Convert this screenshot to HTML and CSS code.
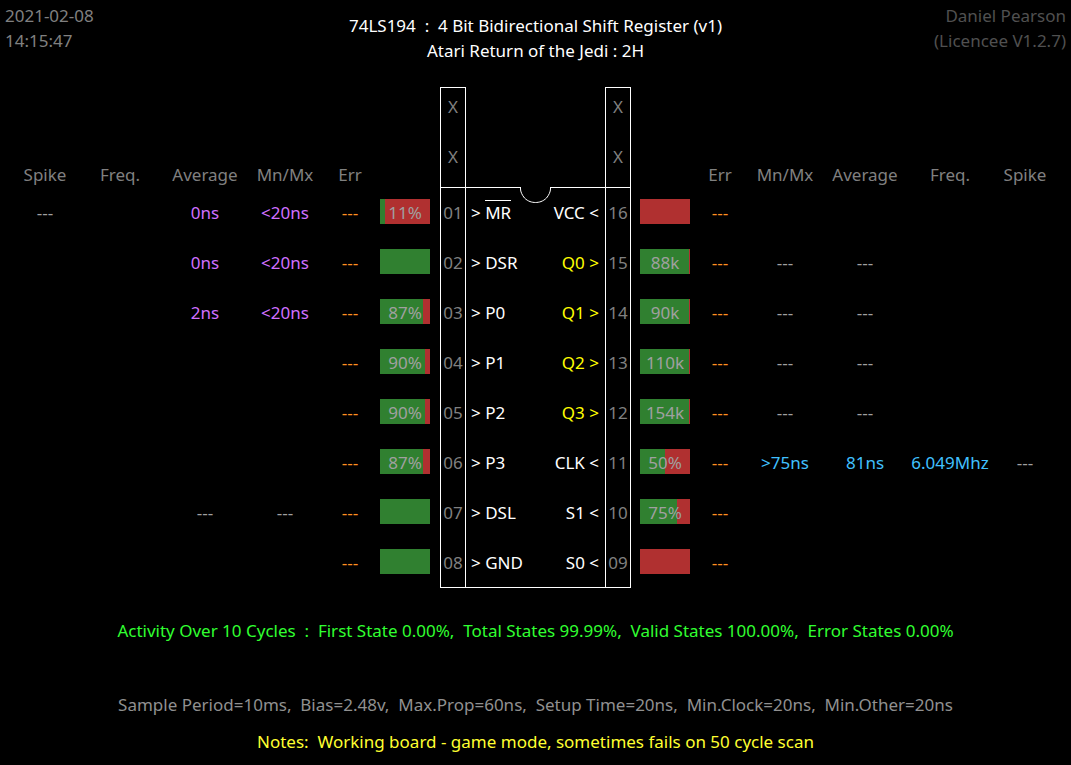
FILE: index.html
```html
<!DOCTYPE html>
<html lang="en">
<head>
<meta charset="utf-8">
<title>74LS194 : 4 Bit Bidirectional Shift Register</title>
<link rel="stylesheet" href="styles.css">
</head>
<body>
<header class="top">
  <div class="stamp">
    <div>2021-02-08</div>
    <div>14:15:47</div>
  </div>
  <div class="title">
    <div class="spaced">74LS194  :  4 Bit Bidirectional Shift Register (v1)</div>
    <div>Atari Return of the Jedi : 2H</div>
  </div>
  <div class="licence">
    <div>Daniel Pearson</div>
    <div>(Licencee V1.2.7)</div>
  </div>
</header>

<main class="board">
  <table class="readings">
    <colgroup><col class="c-spike"><col class="c-freq"><col class="c-avg"><col class="c-mnmx"><col class="c-err"><col class="c-bar"></colgroup>
    <thead>
      <tr><th>Spike</th><th>Freq.</th><th>Average</th><th>Mn/Mx</th><th>Err</th><th></th></tr>
    </thead>
    <tbody>
      <tr><td>---</td><td></td><td class="slow">0ns</td><td class="slow">&lt;20ns</td><td class="err">---</td><td><div class="bar" style="--high:10%">11%</div></td></tr>
      <tr><td></td><td></td><td class="slow">0ns</td><td class="slow">&lt;20ns</td><td class="err">---</td><td><div class="bar" style="--high:100%"></div></td></tr>
      <tr><td></td><td></td><td class="slow">2ns</td><td class="slow">&lt;20ns</td><td class="err">---</td><td><div class="bar" style="--high:86%">87%</div></td></tr>
      <tr><td></td><td></td><td></td><td></td><td class="err">---</td><td><div class="bar" style="--high:90%">90%</div></td></tr>
      <tr><td></td><td></td><td></td><td></td><td class="err">---</td><td><div class="bar" style="--high:90%">90%</div></td></tr>
      <tr><td></td><td></td><td></td><td></td><td class="err">---</td><td><div class="bar" style="--high:86%">87%</div></td></tr>
      <tr><td></td><td></td><td>---</td><td>---</td><td class="err">---</td><td><div class="bar" style="--high:100%"></div></td></tr>
      <tr><td></td><td></td><td></td><td></td><td class="err">---</td><td><div class="bar" style="--high:100%"></div></td></tr>
    </tbody>
  </table>

  <section class="chip" aria-label="74LS194 pins">
    <div class="pins">
      <div class="unused">X</div><div class="unused last">X</div>
      <div class="pin first">01</div><div class="pin">02</div><div class="pin">03</div><div class="pin">04</div>
      <div class="pin">05</div><div class="pin">06</div><div class="pin">07</div><div class="pin">08</div>
    </div>
    <div class="body">
      <div class="edge">
        <span class="line"></span>
        <svg class="notch" viewBox="0 0 31 16" width="31" height="16" aria-hidden="true"><path d="M.5 0V2C.5 4.500 2 8 4.500 11C8 14.500 12 15.500 15.500 15.500C19 15.500 23 14.500 26.500 11C29 8 30.500 4.500 30.500 2V0" fill="none" stroke="#fff"/></svg>
        <span class="line"></span>
      </div>
      <div class="labels">
        <div class="pair"><span>&gt; <span class="inverted">MR</span></span><span>VCC &lt;</span></div>
        <div class="pair"><span>&gt; DSR</span><span class="output">Q0 &gt;</span></div>
        <div class="pair"><span>&gt; P0</span><span class="output">Q1 &gt;</span></div>
        <div class="pair"><span>&gt; P1</span><span class="output">Q2 &gt;</span></div>
        <div class="pair"><span>&gt; P2</span><span class="output">Q3 &gt;</span></div>
        <div class="pair"><span>&gt; P3</span><span>CLK &lt;</span></div>
        <div class="pair"><span>&gt; DSL</span><span>S1 &lt;</span></div>
        <div class="pair"><span>&gt; GND</span><span>S0 &lt;</span></div>
      </div>
    </div>
    <div class="pins">
      <div class="unused">X</div><div class="unused last">X</div>
      <div class="pin first">16</div><div class="pin">15</div><div class="pin">14</div><div class="pin">13</div>
      <div class="pin">12</div><div class="pin">11</div><div class="pin">10</div><div class="pin">09</div>
    </div>
  </section>

  <table class="readings">
    <colgroup><col class="c-bar"><col class="c-err"><col class="c-mnmx"><col class="c-avg"><col class="c-freq"><col class="c-spike"></colgroup>
    <thead>
      <tr><th></th><th>Err</th><th>Mn/Mx</th><th>Average</th><th>Freq.</th><th>Spike</th></tr>
    </thead>
    <tbody>
      <tr><td><div class="bar" style="--high:0%"></div></td><td class="err">---</td><td></td><td></td><td></td><td></td></tr>
      <tr><td><div class="bar" style="--high:98%">88k</div></td><td class="err">---</td><td>---</td><td>---</td><td></td><td></td></tr>
      <tr><td><div class="bar" style="--high:98%">90k</div></td><td class="err">---</td><td>---</td><td>---</td><td></td><td></td></tr>
      <tr><td><div class="bar" style="--high:98%">110k</div></td><td class="err">---</td><td>---</td><td>---</td><td></td><td></td></tr>
      <tr><td><div class="bar" style="--high:98%">154k</div></td><td class="err">---</td><td>---</td><td>---</td><td></td><td></td></tr>
      <tr><td><div class="bar" style="--high:50%">50%</div></td><td class="err">---</td><td class="clock">&gt;75ns</td><td class="clock">81ns</td><td class="clock">6.049Mhz</td><td>---</td></tr>
      <tr><td><div class="bar" style="--high:74%">75%</div></td><td class="err">---</td><td></td><td></td><td></td><td></td></tr>
      <tr><td><div class="bar" style="--high:0%"></div></td><td class="err">---</td><td></td><td></td><td></td><td></td></tr>
    </tbody>
  </table>
</main>

<footer class="summary">
  <p class="activity spaced">Activity Over 10 Cycles  :  First State 0.00%,  Total States 99.99%,  Valid States 100.00%,  Error States 0.00%</p>
  <p class="settings spaced">Sample Period=10ms,  Bias=2.48v,  Max.Prop=60ns,  Setup Time=20ns,  Min.Clock=20ns,  Min.Other=20ns</p>
  <p class="notes spaced">Notes:  Working board - game mode, sometimes fails on 50 cycle scan</p>
</footer>
</body>
</html>
```
FILE: styles.css
```css
* { box-sizing: border-box; }

body {
  margin: 0;
  background: #000;
  color: #fff;
  font: 17px/25px "Noto Sans", "Open Sans", sans-serif;
}

.spaced { white-space: pre-wrap; }

.top {
  display: grid;
  grid-template-columns: 1fr auto 1fr;
  padding: 3px 5px 0;
}
.stamp { color: #808080; }
.title { padding-top: 10px; text-align: center; }
.licence { color: #505050; text-align: right; }

.board {
  display: flex;
  justify-content: center;
  align-items: flex-end;
  gap: 10px;
  margin-top: 24px;
  padding: 0 11px 0 10px;
}

.readings {
  flex: none;
  width: 420px;
  margin-bottom: 1px;
  table-layout: fixed;
  border-collapse: collapse;
  color: #a0a0a0;
  line-height: 27px;
  text-align: center;
  white-space: nowrap;
}
.readings th {
  height: 25px;
  padding: 0;
  color: #808080;
  font-weight: 400;
  line-height: 25px;
}
.readings td {
  height: 50px;
  padding: 12px 0 0;
  vertical-align: top;
}
.c-spike, .c-mnmx { width: 70px; }
.c-freq { width: 80px; }
.c-avg { width: 90px; }
.c-err { width: 60px; }
.c-bar { width: 50px; }
.slow { color: #d070ff; }
.clock { color: #40c0ff; }
.readings .err { color: #ff9020; }

.bar {
  height: 25px;
  background: linear-gradient(90deg, #308030 var(--high), #b03030 var(--high));
}

.chip {
  display: flex;
  flex: none;
  width: 191px;
  margin-right: -1px;
}
.pins {
  width: 26px;
  border: 1px solid #fff;
  color: #808080;
  text-align: center;
}
.unused { height: 50px; padding-top: 6px; }
.unused.last { height: 49px; }
.pin { height: 50px; padding-top: 13px; }
.pin.first { border-top: 1px solid #fff; padding-top: 12px; }
.body {
  flex: 1;
  margin-top: 100px;
  border-bottom: 1px solid #fff;
}
.edge { display: flex; height: 16px; }
.line { flex: 1; border-top: 1px solid #fff; }
.labels { margin-top: -16px; }
.pair {
  display: flex;
  justify-content: space-between;
  align-items: center;
  height: 50px;
  padding: 0 6px 0 5px;
}
.output { color: #ffff00; }
.inverted {
  display: inline-block;
  border-top: 1px solid #fff;
  line-height: 23px;
}

.summary { margin-top: 30px; text-align: center; }
.summary p { margin: 0; }
.activity { color: #30ff30; }
.summary .settings { margin: 49px 0 12px; color: #909090; }
.notes { color: #ffff30; }
```
